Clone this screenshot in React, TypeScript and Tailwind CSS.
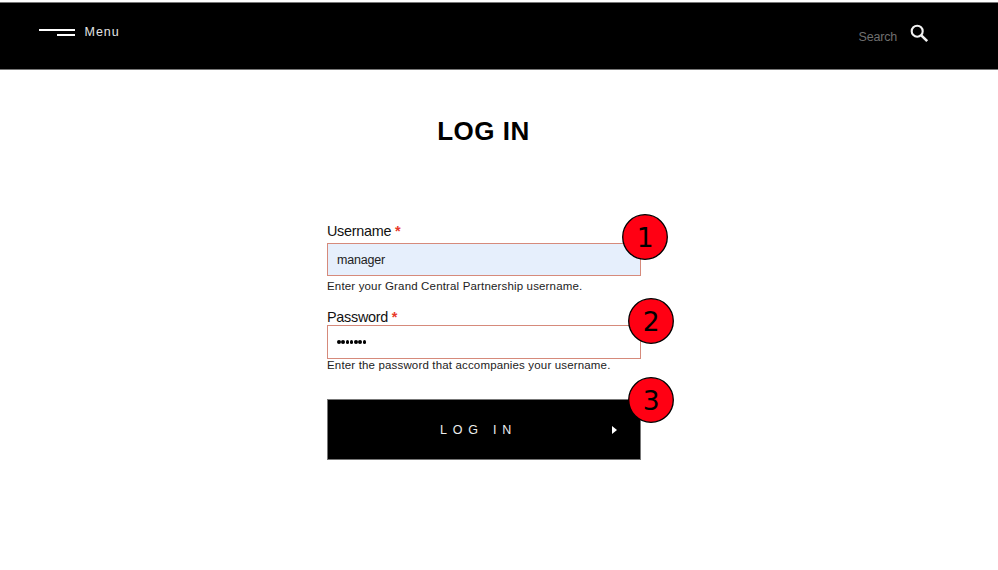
import React from "react";

function Marker({ label, className }: { label: string; className: string }) {
  return (
    <svg className={`absolute h-[46px] w-[46px] ${className}`} viewBox="0 0 46 46">
      <circle cx="23" cy="23" r="22.3" fill="#ff0013" stroke="black" strokeWidth="1.3" />
      <text
        x="23.3"
        y="32.6"
        textAnchor="middle"
        className="fill-black font-['DejaVu_Sans',sans-serif] text-[26.5px]"
      >
        {label}
      </text>
    </svg>
  );
}

function Label({ text }: { text: string }) {
  return (
    <label className="block h-[18px] whitespace-nowrap text-[14.4px] leading-[18px] tracking-[-0.27px] text-[#111]">
      {text} <span className="text-[#e8392b] font-bold">*</span>
    </label>
  );
}

export default function App() {
  return (
    <div className="h-[570px] overflow-hidden bg-white pt-[2px] font-['Liberation_Sans',Arial,sans-serif] text-black">
      <header className="flex h-[68px] items-start justify-between border-y border-[#777] bg-black pl-[39px] pr-[69px]">
        <button className="flex items-center pt-[20px]">
          <span className="flex w-9 flex-col items-end gap-[3px]">
            <span className="h-[2px] w-9 bg-white" />
            <span className="h-[2px] w-[18px] bg-white" />
          </span>
          <span className="ml-[9.5px] text-[12.5px] leading-[18px] tracking-[1px] text-[#e4e4e4]">Menu</span>
        </button>
        <div className="flex items-start">
          <span className="pt-[25px] text-[12.5px] leading-[18px] tracking-[-0.2px] text-[#6f6f6f]">Search</span>
          <svg className="ml-[13px] mt-[21px] h-[19px] w-[19px]" viewBox="0 0 19 19" fill="none" stroke="#f2f2f2">
            <circle cx="7.2" cy="7.2" r="5.5" strokeWidth="2.1" />
            <path d="M11.3 11.3L17.2 17.2" strokeWidth="2.6" />
          </svg>
        </div>
      </header>
      <main className="pl-[327px]">
        <h1 className="w-[313px] pt-[45px] text-center text-[26px] font-bold leading-[32px] tracking-[0.5px]">LOG IN</h1>
        <form className="w-[314px] pt-[75px]">
          <div className="relative">
            <Label text="Username" />
            <div className="mt-[3px] flex h-[33px] items-center border border-[#d68a7b] bg-[#e6effc] pl-[9px] pt-px text-[12.5px] tracking-[-0.2px] text-[#222]">
              manager
            </div>
            <p className="mt-[2px] h-[16px] whitespace-nowrap text-[11.5px] leading-[16px] tracking-[0.16px] text-[#222]">
              Enter your Grand Central Partnership username.
            </p>
            <Marker label="1" className="left-[295px] top-[-8px]" />
          </div>
          <div className="relative mt-[14px]">
            <Label text="Password" />
            <div className="-mt-px flex h-[34px] items-center gap-[0.8px] border border-[#d68a7b] bg-white pl-[9px]">
              {[0, 1, 2, 3, 4, 5, 6].map((i) => (
                <span key={i} className="h-[3.5px] w-[3.5px] rounded-full bg-black" />
              ))}
            </div>
            <p className="-mt-px h-[14px] whitespace-nowrap text-[11.5px] leading-[14px] tracking-[0.16px] text-[#222]">
              Enter the password that accompanies your username.
            </p>
            <Marker label="2" className="left-[301px] top-[-10px]" />
          </div>
          <div className="relative mt-[27px]">
            <button
              type="button"
              className="flex h-[61px] w-[314px] items-center border border-[#777] bg-black pl-[112px] text-[12.5px] text-[#eee]"
            >
              <span className="w-[172px] pt-px text-left tracking-[5.8px]">LOG IN</span>
              <svg className="h-2 w-[5px]" viewBox="0 0 5 8" fill="white">
                <path d="M0 0L5 4L0 8Z" />
              </svg>
            </button>
            <Marker label="3" className="left-[301px] top-[-22px]" />
          </div>
        </form>
      </main>
    </div>
  );
}
